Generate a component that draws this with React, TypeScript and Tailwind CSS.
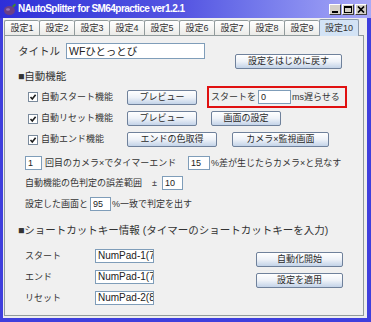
import React from 'react';

const FONT = "font-['Liberation_Sans','Noto_Sans_CJK_JP',sans-serif]";

const tabs = ['設定1', '設定2', '設定3', '設定4', '設定5', '設定6', '設定7', '設定8', '設定9', '設定10'];

function Btn({ w, children }: { w: string; children: React.ReactNode }) {
  return (
    <div
      className={`${w} h-[15px] flex items-center justify-center rounded-[2px] border border-[#6f819b] bg-gradient-to-b from-white via-[#eef2f8] to-[#c3d3e8] text-[9px] leading-none text-[#2a2a2a]`}
    >
      {children}
    </div>
  );
}

function Field({ w, h = 'h-[14px]', text, size = 'text-[9px]' }: { w: string; h?: string; text: string; size?: string }) {
  return (
    <div className={`${w} ${h} bg-white border border-[#7f9db9] flex items-center pl-[2px] overflow-hidden whitespace-nowrap ${size} leading-none text-[#222]`}>
      {text}
    </div>
  );
}

function Check() {
  return (
    <div className="w-[10px] h-[10px] border border-[#7a8a9c] bg-white flex items-center justify-center">
      <svg width="8" height="8" viewBox="0 0 8 8">
        <path d="M1.5 4 L3.3 6 L6.6 1.8" stroke="#1e1e1e" strokeWidth="1.6" fill="none" />
      </svg>
    </div>
  );
}

function CheckRow({ label }: { label: string }) {
  return (
    <div className="w-[109px] flex items-center pl-[10px]">
      <Check />
      <span className="ml-[3px] text-[9px] leading-none">{label}</span>
    </div>
  );
}

function WinBtn({ children }: { children: React.ReactNode }) {
  return (
    <div className="w-[12px] h-[11px] bg-[#d4d0c8] border border-t-white border-l-white border-r-[#404040] border-b-[#404040] flex items-center justify-center">
      {children}
    </div>
  );
}

export default function App() {
  return (
    <div className={`w-[371px] h-[322px] bg-[#3f3fdd] flex flex-col ${FONT} text-[#333]`}>
      {/* Title bar */}
      <div className="h-[18px] flex items-center bg-gradient-to-r from-[#2e2ed8] via-[#5656e2] to-[#a9a9f7] pl-[3px] pr-[4px]">
        <svg width="14" height="14" viewBox="0 0 14 14">
          <ellipse cx="6.5" cy="8.5" rx="5.5" ry="4.5" fill="#6b3f86" />
          <ellipse cx="5" cy="7.5" rx="2" ry="1.2" fill="#9a74b5" />
          <path d="M9 4 L12 1.5 L13 3 L10.5 5.5 Z" fill="#3f8a2c" />
        </svg>
        <span className="ml-[1px] text-white font-bold text-[10px] tracking-[-0.55px] leading-none">
          NAutoSplitter for SM64practice ver1.2.1
        </span>
        <div className="ml-auto flex gap-[1px] mt-[1px]">
          <WinBtn>
            <div className="w-[6px] h-[2px] bg-black mt-[5px]" />
          </WinBtn>
          <WinBtn>
            <div className="w-[8px] h-[7px] border border-black border-t-2" />
          </WinBtn>
          <WinBtn>
            <svg width="8" height="7" viewBox="0 0 8 7">
              <path d="M1 0.5 L7 6.5 M7 0.5 L1 6.5" stroke="#000" strokeWidth="1.7" />
            </svg>
          </WinBtn>
        </div>
      </div>

      {/* Client area */}
      <div className="flex-1 ml-[3px] mr-[4px] mb-[4px] bg-[#eeeeee] flex flex-col pl-[1px] pr-[3px] pb-[2px]">
        {/* Tabs */}
        <div className="h-[17px] flex items-end">
          {tabs.map((t, i) =>
            i === 9 ? (
              <div
                key={t}
                className="w-[40px] h-[17px] -mb-px z-10 border border-b-0 border-[#8c9aac] rounded-t-[2px] bg-[#d3e3f5] flex items-center justify-center text-[9px] leading-none"
              >
                {t}
              </div>
            ) : (
              <div
                key={t}
                className="w-[35px] h-[15px] border border-b-0 border-r-0 border-[#919b9c] rounded-t-[2px] bg-gradient-to-b from-white to-[#ebebe8] flex items-center justify-center text-[9px] leading-none"
              >
                {t}
              </div>
            )
          )}
        </div>

        {/* Panel */}
        <div className="flex-1 border border-[#919b9c] bg-[#f0f0f0] flex flex-col pl-[13px]">
          {/* Title + reset */}
          <div className="mt-[7px] h-[26px] flex">
            <div className="flex items-start">
              <span className="w-[48px] h-[16px] flex items-center text-[10.5px] leading-none">タイトル</span>
              <Field w="w-[139px]" h="h-[16px]" text="WFひとっとび" size="text-[10.5px]" />
            </div>
            <div className="self-end ml-[30px]">
              <Btn w="w-[107px]">設定をはじめに戻す</Btn>
            </div>
          </div>

          {/* Section: auto */}
          <div className="h-[14px] flex items-center text-[10.5px] leading-none">■自動機能</div>

          <div className="mt-[3px] h-[22px] flex items-center">
            <CheckRow label="自動スタート機能" />
            <Btn w="w-[70px]">プレビュー</Btn>
            <div className="ml-[10px] w-[140px] h-[22px] border-2 border-[#e01010] flex items-center pl-[2px] text-[9px] leading-none">
              <span>スタートを</span>
              <div className="ml-[2px]">
                <Field w="w-[33px]" text="0" />
              </div>
              <span className="ml-[1px]">ms遅らせる</span>
            </div>
          </div>

          <div className="mt-[3px] h-[15px] flex items-center">
            <CheckRow label="自動リセット機能" />
            <Btn w="w-[70px]">プレビュー</Btn>
            <div className="ml-[14px]">
              <Btn w="w-[70px]">画面の設定</Btn>
            </div>
          </div>

          <div className="mt-[6px] h-[15px] flex items-center">
            <CheckRow label="自動エンド機能" />
            <Btn w="w-[90px]">エンドの色取得</Btn>
            <div className="ml-[15px]">
              <Btn w="w-[97px]">カメラ×監視画面</Btn>
            </div>
          </div>

          <div className="mt-[9px] h-[14px] flex items-center pl-[7px] text-[9px] leading-none">
            <Field w="w-[17px]" text="1" />
            <span className="ml-[3px] w-[143px]">回目のカメラ×でタイマーエンド</span>
            <Field w="w-[22px]" text="15" />
            <span className="ml-[1px]">%差が生じたらカメラ×と見なす</span>
          </div>

          <div className="mt-[6px] h-[14px] flex items-center pl-[7px] text-[9px] leading-none">
            <span className="w-[127px]">自動機能の色判定の誤差範囲</span>
            <span className="w-[10px]">±</span>
            <Field w="w-[21px]" text="10" />
          </div>

          <div className="mt-[7px] h-[14px] flex items-center pl-[7px] text-[9px] leading-none">
            <span className="w-[65px]">設定した画面と</span>
            <Field w="w-[21px]" text="95" />
            <span className="ml-[1px]">%一致で判定を出す</span>
          </div>

          {/* Section: shortcut */}
          <div className="mt-[12px] h-[14px] flex items-center text-[10.5px] leading-none">
            ■ショートカットキー情報 (タイマーのショートカットキーを入力)
          </div>

          <div className="mt-[12px] flex pl-[7px]">
            <div className="flex flex-col gap-[7px] text-[9px] leading-none">
              {[
                ['スタート', 'NumPad-1(7'],
                ['エンド', 'NumPad-1(7'],
                ['リセット', 'NumPad-2(8'],
              ].map(([label, key]) => (
                <div key={label} className="h-[14px] flex items-center">
                  <span className="w-[70px]">{label}</span>
                  <Field w="w-[59px]" text={key} size="text-[10px]" />
                </div>
              ))}
            </div>
            <div className="ml-[102px] mt-[3px] flex flex-col gap-[6px]">
              <Btn w="w-[87px]">自動化開始</Btn>
              <Btn w="w-[87px]">設定を適用</Btn>
            </div>
          </div>
        </div>
      </div>
    </div>
  );
}
